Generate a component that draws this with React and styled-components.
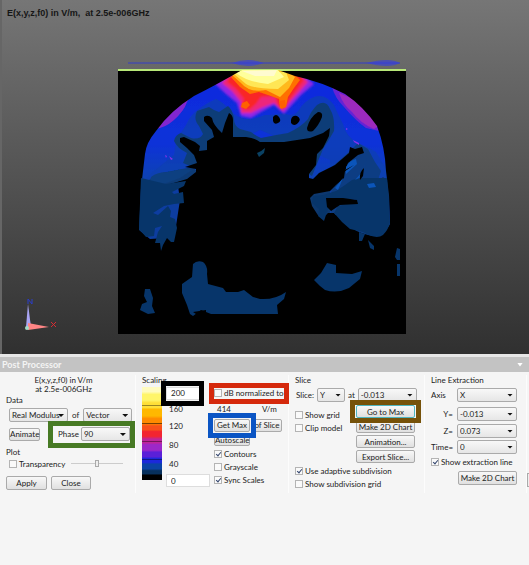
import React from "react";
import styled, { createGlobalStyle, css } from "styled-components";

const GlobalStyle = createGlobalStyle`
  * { box-sizing: border-box; }
  body { margin: 0; background: #f5f5f5; }
  body, button, input, select {
    font-family: Lato, "Liberation Sans", sans-serif;
    font-size: 8px;
    line-height: 10px;
    color: #222;
  }
`;

const Page = styled.main`
  display: flex;
  flex-direction: column;
  min-height: 100vh;
  background: #f5f5f5;
`;

const Viewport = styled.section`
  position: relative;
  background: linear-gradient(#767676, #666 22%, #4c4c4c 60%, #303030);
  border-left: 2px solid #666;
`;

const SceneTitle = styled.h1`
  position: absolute;
  top: 7px;
  left: 5px;
  margin: 0;
  font: bold 9px/12px "Liberation Sans", sans-serif;
  white-space: pre;
  color: #161616;
`;

const Drawing = styled.svg`
  display: block;
  width: 100%;
  height: auto;
`;

const PanelHeader = styled.header`
  display: flex;
  align-items: center;
  justify-content: space-between;
  height: 18px;
  padding: 0 6px 0 2px;
  border-top: 3px solid #e6e6e6;
  background: #c3c3c3;
`;

const PanelTitle = styled.h2`
  margin: 0;
  font-size: 9px;
  line-height: 10px;
  font-weight: 700;
  color: #f4f4f4;
`;

const PanelMenu = styled.button`
  width: 6px;
  height: 4px;
  padding: 0;
  border: 0;
  background: #fff;
  clip-path: polygon(0 0, 100% 0, 50% 100%);
`;

const PanelBody = styled.div`
  display: grid;
  grid-template-columns: 136fr 153fr 136fr 104fr;
  padding-top: 3px;
`;

const Group = styled.section`
  display: flex;
  flex-direction: column;
  flex: 1;
  min-width: 0;
  height: 118px;
  padding: 0 6px;
  border-right: 1px solid #fcfcfc;
  white-space: nowrap;
`;

const GroupTitle = styled.h3`
  margin: 0;
  font-size: 8px;
  line-height: 10px;
  font-weight: 400;
`;

const FieldCaption = styled.div`
  padding: 1px 8px 1px 0;
  text-align: center;
  line-height: 9px;
`;

const CaptionLine = styled.p`
  margin: 0;
`;

const Row = styled.div`
  display: flex;
  align-items: center;
  flex: none;
  gap: ${(p) => p.$gap || 4}px;
  height: ${(p) => p.$h || 16}px;
  padding-left: ${(p) => p.$indent || 0}px;
`;

const Column = styled.div`
  display: flex;
  flex-direction: column;
  flex: none;
  width: ${(p) => p.$w}px;
`;

const Spacer = styled.div`
  flex: none;
  height: ${(p) => p.$h}px;
`;

const Columns = styled.div`
  display: flex;
  gap: ${(p) => p.$gap || 0}px;
`;

const SelectBox = styled.span`
  position: relative;
  display: inline-flex;
  flex: none;
  width: ${(p) => p.$w}px;
  &::after {
    content: "";
    position: absolute;
    right: 4px;
    top: 6px;
    width: 6px;
    height: 3px;
    background: #111;
    clip-path: polygon(0 0, 100% 0, 50% 100%);
    pointer-events: none;
  }
`;

const SelectControl = styled.select`
  appearance: none;
  width: 100%;
  height: 14px;
  padding: 0 2px;
  border: 1px solid #aaa;
  border-radius: 2px;
  background: linear-gradient(#f8f8f8, #e6e6e6);
`;

const Button = styled.button`
  flex: none;
  width: ${(p) => p.$w}px;
  height: ${(p) => p.$h || 13}px;
  padding: 0;
  border: 1px solid ${(p) => (p.$focus ? "#4fb5c0" : "#aaa")};
  border-radius: 2px;
  background: linear-gradient(#f8f8f8, #e0e0e0);
  line-height: 10px;
  text-align: center;
  white-space: nowrap;
`;

const CheckLabel = styled.label`
  display: flex;
  align-items: center;
  flex: none;
  gap: 2px;
  height: ${(p) => p.$h || 13}px;
`;

const CheckBox = styled.input.attrs({ type: "checkbox" })`
  appearance: none;
  position: relative;
  flex: none;
  width: 8px;
  height: 8px;
  margin: 0;
  border: 1px solid #b4b4b4;
  background: #fafafa;
  &:checked::after {
    content: "";
    position: absolute;
    left: 2px;
    top: 0;
    width: 2px;
    height: 4px;
    border: solid #34466e;
    border-width: 0 1px 1px 0;
    transform: rotate(40deg);
  }
`;

const ScaleInput = styled.input`
  width: ${(p) => p.$w}px;
  height: 13px;
  padding: 0 4px;
  border: 1px solid #ddd;
  background: #fff;
`;

const Highlight = styled.span`
  position: relative;
  display: inline-flex;
  align-items: center;
  flex: none;
  gap: 2px;
  ${(p) =>
    p.$color &&
    css`
      &::after {
        content: "";
        position: absolute;
        z-index: 1;
        inset: ${p.$inset};
        border: 5px solid ${p.$color};
        pointer-events: none;
      }
    `}
`;

const Slider = styled.input.attrs({ type: "range" })`
  appearance: none;
  width: 52px;
  height: 10px;
  margin: 0;
  background: linear-gradient(#ccc, #ccc) center / 100% 1px no-repeat;
  &::-webkit-slider-thumb {
    appearance: none;
    width: 4px;
    height: 7px;
    border: 1px solid #aaa;
    background: #eee;
  }
`;

const ColorBar = styled.div`
  flex: none;
  width: 20px;
  height: 93px;
  background:
    linear-gradient(#0006, #0006) 0 18px / 100% 1px no-repeat,
    linear-gradient(#0008, #0008) 0 36px / 100% 1px no-repeat,
    linear-gradient(#0006, #0006) 0 54px / 100% 1px no-repeat,
    linear-gradient(#0006, #0006) 0 72px / 100% 1px no-repeat,
    linear-gradient(
      #fffbc0 0 5%, #fff56a 8% 14%, #ffdf38 17% 22%, #ffb800 24% 31%,
      #ff8b00 34% 39%, #f8501a 42% 46%, #f22530 48% 53%, #c0259a 56% 60%,
      #9c28c8 62% 68%, #5b20d8 70% 75%, #1c28dc 77% 81%, #0b43a5 83% 88%,
      #07305c 90% 93%, #000 95%
    );
`;

const AxisRow = styled.div`
  display: grid;
  grid-template-columns: 26px 60px;
  align-items: center;
  flex: none;
  height: ${(p) => p.$h}px;
`;

const AxisLabel = styled.label`
  padding-right: 4px;
  text-align: ${(p) => (p.$left ? "left" : "right")};
`;

const LastColumn = styled.div`
  display: flex;
  min-width: 0;
`;

const ClippedEdge = styled.div`
  flex: none;
  align-self: flex-end;
  width: 2px;
  height: 14px;
  margin-bottom: 6px;
  border: 1px solid #aaa;
  border-right: 0;
  background: #eee;
`;

function Select({ id, label, value, w }) {
  return (
    <SelectBox $w={w}>
      <SelectControl id={id} aria-label={label} defaultValue={value}>
        <option>{value}</option>
      </SelectControl>
    </SelectBox>
  );
}

function Check({ label, checked, h }) {
  return (
    <CheckLabel $h={h}>
      <CheckBox defaultChecked={checked} />
      {label}
    </CheckLabel>
  );
}

function FieldPlot() {
  return (
    <Drawing viewBox="2 0 527 354" role="img" aria-label="Electric field slice">
      <defs>
        <linearGradient id="tissue" x1="0" y1="70" x2="0" y2="235" gradientUnits="userSpaceOnUse">
          <stop offset="0" stopColor="#1028e0" />
          <stop offset=".45" stopColor="#0c32d8" />
          <stop offset=".65" stopColor="#0b42b4" />
          <stop offset=".74" stopColor="#08396f" />
          <stop offset="1" stopColor="#07346a" />
        </linearGradient>
        <filter id="soft"><feGaussianBlur stdDeviation="1" /></filter>
        <filter id="edge"><feGaussianBlur stdDeviation=".5" /></filter>
        <clipPath id="dome">
          <path d="M242 70Q216 85 194 96Q170 111 156 131Q146 143 145 154L143 171L141 188L139 230L150 239L166 238L184 215H340L350 227Q362 235 374 236Q386 233 390 224L389 195L386 171Q385 147 377 126Q363 106 345 94Q322 82 295 76L278 70Z" />
        </clipPath>
      </defs>

      <path d="M128 63H400" stroke="#343fc8" strokeWidth="1" />
      <path d="M232 63Q248 57 264 63Q248 69 232 63ZM366 63Q390 57 400 63Q390 69 366 63Z" fill="#343de5" opacity=".6" filter="url(#edge)" />
      <path d="M118 69H406V334H118Z" fill="#000" />
      <path d="M118 70H406" stroke="#b8e878" strokeWidth="2" />

      <g clipPath="url(#dome)" filter="url(#edge)">
        <path d="M135 70H395V240H135Z" fill="url(#tissue)" />
        <path d="M216 99Q205 104 199 109Q191 114 186 125Q182 132 178 136Q175 145 174 155Q166 161 158 168Q148 174 140 187V240H200V160L260 130L330 160V240H390V174Q382 163 376 152Q366 146 358 143Q346 137 343 124Q337 112 334 105Q325 93 314 97Q304 101 299 110Q293 118 284 113Q273 115 265 115Q256 119 246 119Q235 117 230 110Q223 102 216 99Z" fill="#0a40b2" opacity=".75" />
        <path d="M209 107Q213 110 219 112L228 106Q233 110 234 119Q234 126 240 129L251 132Q256 136 261 138Q275 135 288 133Q301 127 308 119Q311 111 317 105Q326 99 330 109Q335 117 334 131Q329 140 323 149L312 176L300 169L257 146L229 147L203 160L197 169L183 163L187 153Q177 148 174 141Q175 135 181 133L191 138Q200 140 203 134L199 126Q193 119 197 111Z" fill="#0a3d78" />
        <path d="M142 190L149 180Q158 173 172 171L193 167L199 174L188 184L174 188L160 195L152 214L145 231H135Z" fill="#083b76" />
        <path d="M151 177Q157 172 168 172L183 169L192 170L180 178L161 185L148 189Z" fill="#083f81" />
        <path d="M332 167L350 151L358 143L368 149L375 162L381 171L377 183L388 191V237H330Z" fill="#093e83" />
        <path d="M376 183L383 177L389 182V204H376Z" fill="#07356a" />
        <path d="M190 97Q176 106 165 118L155 129Q165 128 174 120Q184 111 187 102Z" fill="#8127cf" />
        <path d="M332 87Q335 98 344 107Q355 120 366 128L379 131Q374 115 360 103Q348 92 332 87Z" fill="#6524d5" />
        <path d="M339 93Q343 105 352 112Q360 123 374 129L379 126Q368 109 354 99Z" fill="#9c29bd" />
        <g filter="url(#soft)">
          <path d="M229 73L214 83L226 94L237 103L241 116L251 118L261 112L274 105L284 114L291 106L301 95L314 84L301 72Z" fill="#8f28e5" />
          <path d="M228 76L222 83L232 91L241 102L241 113L251 113L261 108L274 103L283 111L289 103L300 91L308 82L298 72Z" fill="#ed287b" />
          <path d="M230 76L227 82L236 89L244 99L240 108L249 110L256 104L261 97L275 96L279 108L286 108L289 100L296 91L304 80L297 72Z" fill="#f92525" />
        </g>
        <path d="M231 77L240 87L250 94L259 92L268 95L279 99L280 108L286 107L288 97L294 88L300 80L292 72H238Z" fill="#ff7000" />
        <path d="M232 75L241 83Q249 93 266 90L280 97L289 88L295 77L285 70H239Z" fill="#ffb91f" />
        <path d="M234 74L246 84Q255 89 278 89L289 80L286 72H240Z" fill="#ffe655" />
        <path d="M236 73Q247 82 268 84L284 77L278 70H242Z" fill="#ffff9c" />
        <path d="M242 71L255 76H274L277 70Z" fill="#fffbd0" />
        <path d="M242 103L247 101L250 105L246 109L241 107ZM279 101L285 100L286 107L281 109Z" fill="#ff6000" />
        <path d="M165 155l2 1-1 2zM169 156l4 3-2 1zM353 140l6 3v2l-5-3zM346 128l2 1-2 1z" fill="#8433e8" />
      </g>

      <path d="M166 239L171 232L176 226L180 200L178 186L167 185L187 179L196 172L196 169L185 167L197 163L194 155L187 148L180 142V138L184 137L195 142L200 146L199 151L207 150V141L214 137L212 130L204 121V117Q208 114 212 118Q213 125 222 133L225 123L229 113Q233 115 233 120V137H246Q255 138 260 142L284 142L310 138L323 133L330 128L329 136L323 148L317 154L316 165L309 174V178L313 179L319 173L335 165L349 153L350 147L355 149L362 147L364 153L358 155L348 163L345 171L344 178L336 185L330 191L314 194L310 198L312 206L321 220L328 213L334 213L342 222L350 231V241Z" fill="#000" />
      <path d="M273 117Q276 113 279 117Q282 121 278 123Q274 125 273 121ZM291 120Q292 115 297 116Q302 119 298 123Q294 127 291 123ZM307 128Q310 117 318 112Q323 112 322 117Q319 125 313 131Q307 133 307 128Z" fill="#000" />
      <path d="M257 153Q262 151 265 148L264 153L259 157Z" fill="#0a4163" />
      <path d="M141 178L166 184L186 181L184 186L172 192L174 194L183 192L184 203L174 204L164 206L153 213L158 215L168 206L171 211L170 217L175 219L177 228L174 242H171L167 238L163 245L161 251L160 243H155L158 232L162 226L155 228L154 236L146 237L139 229Z" fill="#07356a" />
      <path d="M336 191L345 185L352 180L361 178H387L389 204L390 223Q388 230 383 235Q376 240 363 232L350 229L342 222L334 213L338 206L358 202L355 199L329 199L328 209L324 221L318 216L319 209L312 203L313 196L323 195Z" fill="#07356a" />
      <path d="M326 198H343L357 200L358 204L340 205L331 211L327 207Z" fill="#000" />
      <path d="M346 167Q350 160 356 159L357 164L346 174ZM363 171L367 158L361 177L355 180ZM335 188L343 178L338 190ZM367 184L374 183L376 187L369 188Z" fill="#0b55ba" />
      <path d="M360 180Q359 172 364 168L363 176ZM341 174L354 165L345 170Z" fill="#000" />
      <path d="M193 264Q197 260 203 262Q208 266 207 274L208 284L223 288L226 292H238L244 290L253 297L260 299Q275 300 286 292L284 299L277 305L278 314H211L201 310L193 316L190 314L187 305L182 293L182 284L192 277ZM145 289H150L153 298L152 306L155 313L148 314L140 310L142 304L147 302L144 296ZM327 263L336 265V273L352 274L362 271L360 279L349 288Q337 294 325 290L320 286L314 280L321 273ZM359 232L365 234L362 241H359ZM368 240L374 246V250L370 248ZM397 248L400 249V260H397L395 257ZM397 264H400V276H397Z" fill="#07356a" />
      <path d="M193 312L206 310V314H196Z" fill="#000" />

      <g filter="url(#edge)">
        <path d="M26 327L28 304L31 327Z" fill="#a9a5f4" />
        <path d="M28 304V299L32 304V299" stroke="#2b3cc9" fill="none" />
        <path d="M28 323L49 327L28 330Z" fill="#ff8585" />
        <circle cx="27" cy="328" r="2" fill="#a1dcc6" />
        <path d="M51 322l5 5M56 322l-5 5" stroke="#d92b33" fill="none" />
      </g>
    </Drawing>
  );
}

export default function App() {
  return (
    <>
      <GlobalStyle />
      <Page>
        <Viewport>
          <SceneTitle>E(x,y,z,f0) in V/m,  at 2.5e-006GHz</SceneTitle>
          <FieldPlot />
        </Viewport>
        <PanelHeader>
          <PanelTitle>Post Processor</PanelTitle>
          <PanelMenu aria-label="Panel menu" />
        </PanelHeader>
        <PanelBody>
          <Group>
            <FieldCaption>
              <CaptionLine>E(x,y,z,f0) in V/m</CaptionLine>
              <CaptionLine>at 2.5e-006GHz</CaptionLine>
            </FieldCaption>
            <GroupTitle>Data</GroupTitle>
            <Row $h={20} $indent={3}>
              <Select label="Component" value="Real Modulus" w={59} />
              of
              <Select label="Quantity" value="Vector" w={49} />
            </Row>
            <Row $h={18} $indent={3} $gap={18}>
              <Button $w={31}>Animate</Button>
              <Highlight $color="#477a24" $inset="-6px -5px -7px -10px">
                <label htmlFor="phase">Phase</label>
                <Select id="phase" value="90" w={49} />
              </Highlight>
            </Row>
            <Spacer $h={4} />
            <GroupTitle>Plot</GroupTitle>
            <Row $h={13} $indent={3} $gap={6}>
              <Check label="Transparency" />
              <Slider aria-label="Transparency level" defaultValue="50" />
            </Row>
            <Spacer $h={5} />
            <Row>
              <Button $w={41} $h={14}>Apply</Button>
              <Button $w={40} $h={14}>Close</Button>
            </Row>
          </Group>

          <Group>
            <GroupTitle>Scaling</GroupTitle>
            <Columns $gap={4}>
              <Columns>
                <Column $w={20}>
                  <Spacer $h={2} />
                  <ColorBar />
                </Column>
                <Column $w={48}>
                  <Row $h={16} $indent={4}>
                    <Highlight $color="#000" $inset="-6px -2px -6px -5px">
                      <ScaleInput $w={36} aria-label="Maximum" defaultValue="200" />
                    </Highlight>
                  </Row>
                  <Row $h={16} $indent={7}>160</Row>
                  <Row $h={18} $indent={7}>120</Row>
                  <Row $h={20} $indent={7}>80</Row>
                  <Row $h={17} $indent={7}>40</Row>
                  <Row $h={17} $indent={4}>
                    <ScaleInput $w={44} aria-label="Minimum" defaultValue="0" />
                  </Row>
                </Column>
              </Columns>
              <Column $w={70}>
                <Row $h={16}>
                  <Highlight $color="#d5290c" $inset="-4px -5px -4px -5px">
                    <CheckLabel>
                      <CheckBox />
                      dB normalized to
                    </CheckLabel>
                  </Highlight>
                </Row>
                <Row $h={16} $indent={3} $gap={31}>
                  <span>414</span>
                  <span>V/m</span>
                </Row>
                <Row $gap={2}>
                  <Highlight $color="#0b55c4" $inset="-6px">
                    <Button $w={36}>Get Max</Button>
                  </Highlight>
                  <Button $w={30}>of Slice</Button>
                </Row>
                <Row $h={14}>
                  <Button $w={36} $h={12}>Autoscale</Button>
                </Row>
                <Check label="Contours" checked />
                <Check label="Grayscale" />
                <Check label="Sync Scales" checked />
              </Column>
            </Columns>
          </Group>

          <Group>
            <GroupTitle>Slice</GroupTitle>
            <Row $h={19} $indent={1} $gap={3}>
              <label htmlFor="slice">Slice:</label>
              <Select id="slice" value="Y" w={28} />
              at
              <Select label="Slice position" value="-0.013" w={59} />
            </Row>
            <Columns>
              <Column $w={61}>
                <Spacer $h={4} />
                <Check label="Show grid" />
                <Check label="Clip model" />
              </Column>
              <Column $w={59}>
                <Row $h={15}>
                  <Highlight $color="#765209" $inset="-5px -6px">
                    <Button $w={59} $focus>Go to Max</Button>
                  </Highlight>
                </Row>
                <Row $h={15}><Button $w={59}>Make 2D Chart</Button></Row>
                <Row $h={15}><Button $w={59}>Animation...</Button></Row>
                <Row $h={15}><Button $w={59}>Export Slice...</Button></Row>
              </Column>
            </Columns>
            <Check label="Use adaptive subdivision" checked />
            <Check label="Show subdivision grid" />
          </Group>

          <LastColumn>
            <Group>
              <GroupTitle>Line Extraction</GroupTitle>
              <AxisRow $h={19}>
                <AxisLabel $left htmlFor="axis">Axis</AxisLabel>
                <Select id="axis" value="X" w={60} />
              </AxisRow>
              <AxisRow $h={19}>
                <AxisLabel htmlFor="y">Y=</AxisLabel>
                <Select id="y" value="-0.013" w={60} />
              </AxisRow>
              <AxisRow $h={15}>
                <AxisLabel htmlFor="z">Z=</AxisLabel>
                <Select id="z" value="0.073" w={60} />
              </AxisRow>
              <AxisRow $h={17}>
                <AxisLabel htmlFor="time">Time=</AxisLabel>
                <Select id="time" value="0" w={60} />
              </AxisRow>
              <Check label="Show extraction line" checked />
              <Row $h={20} $indent={27}>
                <Button $w={59} $h={14}>Make 2D Chart</Button>
              </Row>
            </Group>
            <ClippedEdge />
          </LastColumn>
        </PanelBody>
      </Page>
    </>
  );
}
